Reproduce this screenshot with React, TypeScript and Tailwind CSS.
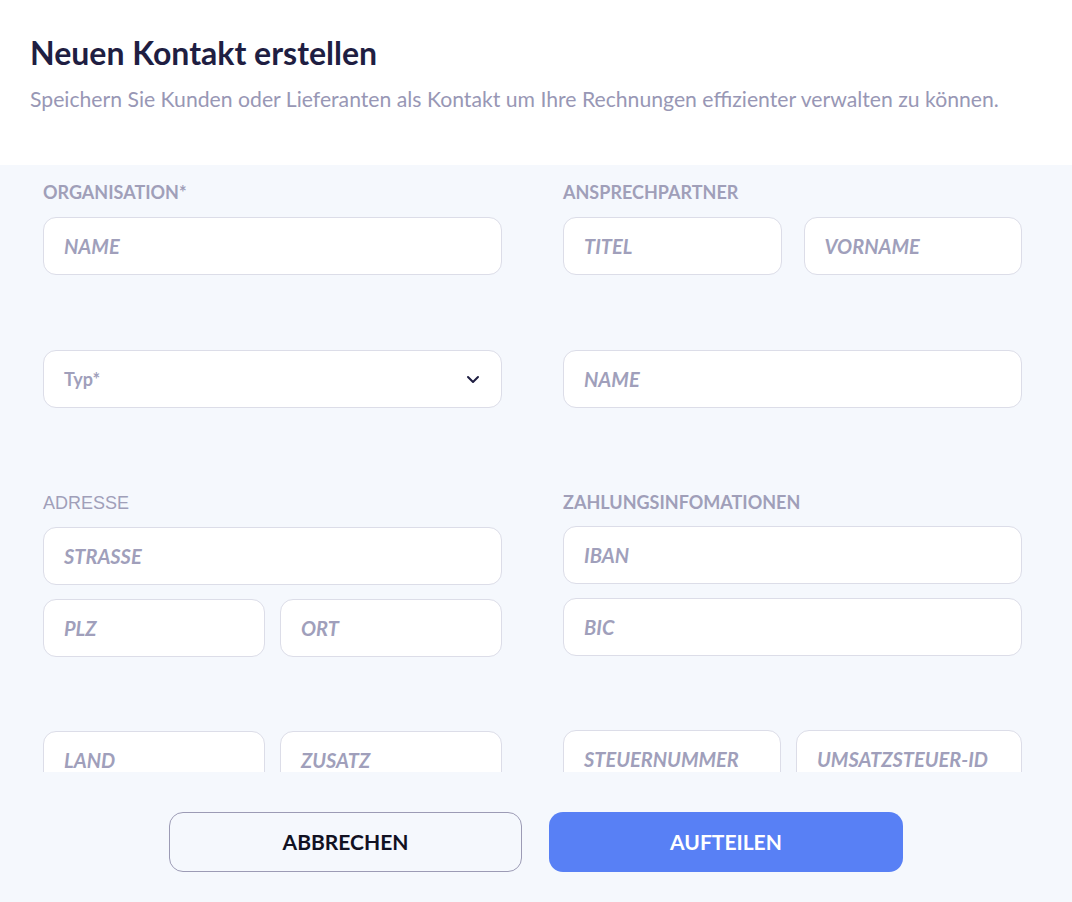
const lato = { fontFamily: "Lato, 'Noto Sans', sans-serif" };

function Field({ placeholder, className = "" }: { placeholder: string; className?: string }) {
  return (
    <div
      className={`h-[58px] rounded-[13px] border border-[#dcdde8] bg-white flex items-center px-5 ${className}`}
    >
      <span className="text-[20px] italic font-bold text-[#a09fbb]">{placeholder}</span>
    </div>
  );
}

function Label({ children, arial = false }: { children: React.ReactNode; arial?: boolean }) {
  return (
    <div
      className={`h-[35px] text-[18px] leading-[20px] text-[#a09fb9] ${arial ? "font-normal" : "font-bold"}`}
      style={arial ? { fontFamily: "'Liberation Sans', Arial, sans-serif" } : undefined}
    >
      {children}
    </div>
  );
}

export default function App() {
  return (
    <div className="w-[1072px] h-[902px] bg-[#f5f8fd] flex flex-col" style={lato}>
      <div className="bg-white h-[165px] pl-[30px] pt-[34px]">
        <h1 className="text-[32px] leading-[38px] font-bold text-[#1f1e42]">Neuen Kontakt erstellen</h1>
        <p className="mt-[15px] text-[21.2px] leading-[24px] text-[#9897b5]">
          Speichern Sie Kunden oder Lieferanten als Kontakt um Ihre Rechnungen effizienter verwalten zu können.
        </p>
      </div>

      <div className="h-[607px] overflow-hidden pl-[43px] pt-[17px]">
        <div className="grid grid-cols-[459px_459px] gap-x-[61px]">
          <div className="flex flex-col">
            <Label>ORGANISATION*</Label>
            <Field placeholder="NAME" />
            <div className="mt-[75px] h-[58px] rounded-[13px] border border-[#dcdde8] bg-white flex items-center justify-between pl-5 pr-[21px]">
              <span className="text-[18px] font-bold text-[#a09fbb]">Typ*</span>
              <svg width="14" height="9" viewBox="0 0 14 9" fill="none">
                <path d="M2 2l5 5 5-5" stroke="#1f1e42" strokeWidth="2" strokeLinecap="round" strokeLinejoin="round" />
              </svg>
            </div>
            <div className="mt-[85px]">
              <Label arial>ADRESSE</Label>
            </div>
            <Field placeholder="STRASSE" className="-mt-[1px]" />
            <div className="mt-[14px] grid grid-cols-2 gap-[15px]">
              <Field placeholder="PLZ" />
              <Field placeholder="ORT" />
            </div>
            <div className="mt-[74px] grid grid-cols-2 gap-[15px]">
              <Field placeholder="LAND" />
              <Field placeholder="ZUSATZ" />
            </div>
          </div>

          <div className="flex flex-col">
            <Label>ANSPRECHPARTNER</Label>
            <div className="grid grid-cols-2 gap-[22px]">
              <Field placeholder="TITEL" />
              <Field placeholder="VORNAME" />
            </div>
            <Field placeholder="NAME" className="mt-[75px]" />
            <div className="mt-[84px]">
              <Label>ZAHLUNGSINFOMATIONEN</Label>
            </div>
            <Field placeholder="IBAN" className="-mt-[1px]" />
            <Field placeholder="BIC" className="mt-[14px]" />
            <div className="mt-[74px] flex gap-[15px]">
              <Field placeholder="STEUERNUMMER" className="w-[218px]" />
              <Field placeholder="UMSATZSTEUER-ID" className="flex-1" />
            </div>
          </div>
        </div>
      </div>

      <div className="flex justify-center gap-[27px] pt-[40px]">
        <button className="w-[353px] h-[60px] rounded-[14px] border border-[#9c9bb5] text-[21px] font-bold text-[#111122]">
          ABBRECHEN
        </button>
        <button className="w-[354px] h-[60px] rounded-[14px] bg-[#5880f5] text-[21px] font-bold text-white">
          AUFTEILEN
        </button>
      </div>
    </div>
  );
}
